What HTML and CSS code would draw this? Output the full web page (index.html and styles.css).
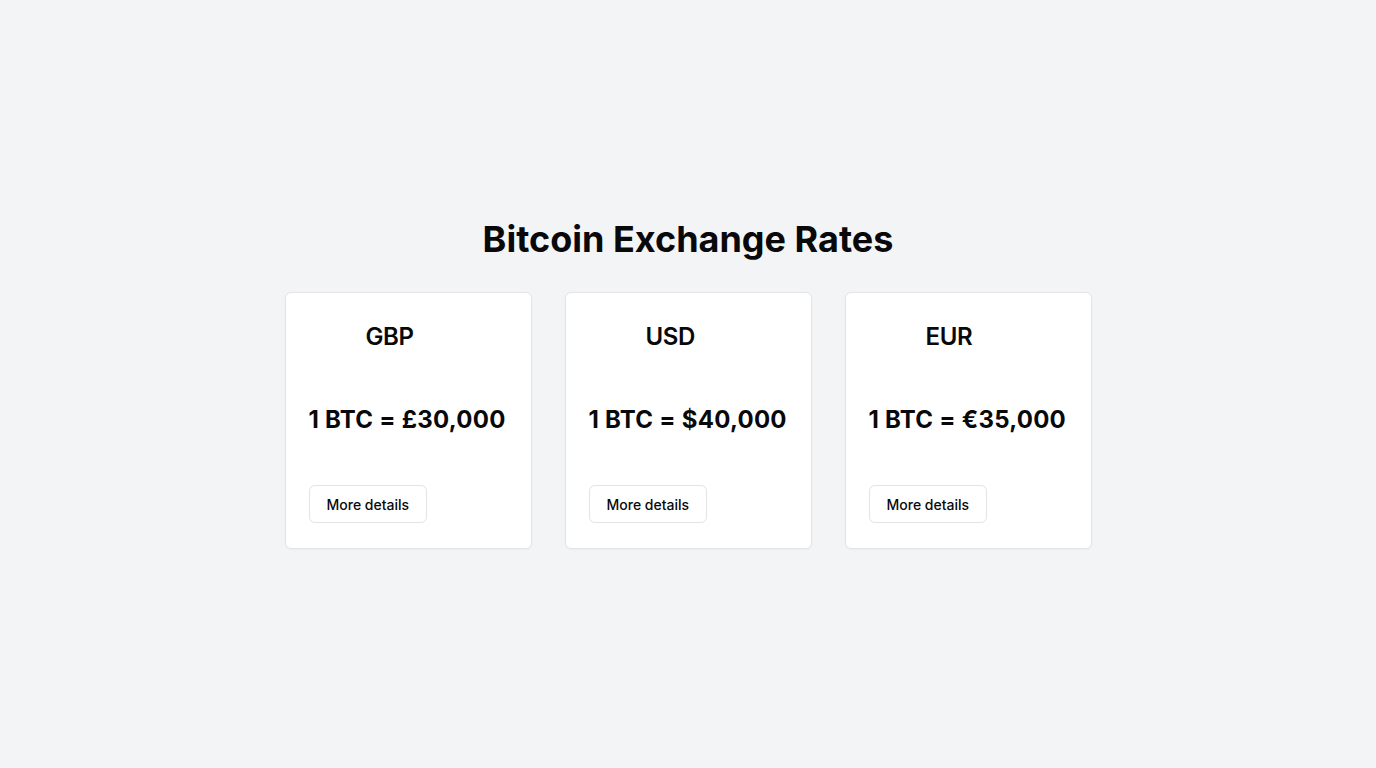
FILE: index.html
```html
<!DOCTYPE html>
<html lang="en">
<head>
<meta charset="utf-8">
<title>Bitcoin Exchange Rates</title>
<link rel="stylesheet" href="styles.css">
</head>
<body>
<main class="page">
  <h1 class="title">Bitcoin Exchange Rates</h1>
  <div class="cards">
    <div class="card">
      <div class="card-header"><span class="flag"></span><span class="currency">GBP</span></div>
      <div class="price">1 BTC = £30,000</div>
      <div class="card-footer"><button class="btn">More details</button></div>
    </div>
    <div class="card">
      <div class="card-header"><span class="flag"></span><span class="currency">USD</span></div>
      <div class="price">1 BTC = $40,000</div>
      <div class="card-footer"><button class="btn">More details</button></div>
    </div>
    <div class="card">
      <div class="card-header"><span class="flag"></span><span class="currency">EUR</span></div>
      <div class="price">1 BTC = €35,000</div>
      <div class="card-footer"><button class="btn">More details</button></div>
    </div>
  </div>
</main>
</body>
</html>
```
FILE: styles.css
```css
* { box-sizing: border-box; }
html, body { margin: 0; padding: 0; }
body {
  background: #f3f4f6;
  font-family: Inter, "Noto Sans", sans-serif;
  color: #09090b;
}
.page {
  min-height: 100vh;
  display: flex;
  flex-direction: column;
  align-items: center;
  justify-content: center;
}
.title {
  margin: 0 0 33px;
  font-size: 36px;
  line-height: 40px;
  font-weight: 700;
}
.cards {
  display: flex;
  gap: 33px;
}
.card {
  width: 247px;
  background: #fff;
  border: 1px solid #e4e4e7;
  border-radius: 6px;
  padding: 24px 23px 25px 23px;
  display: flex;
  flex-direction: column;
  box-shadow: 0 1px 2px rgba(0,0,0,0.03);
}
.card-header {
  display: flex;
  align-items: center;
  gap: 16px;
  height: 40px;
}
.flag {
  width: 41px;
  height: 40px;
}
.currency {
  font-size: 24px;
  line-height: 32px;
  font-weight: 600;
  letter-spacing: -0.4px;
}
.price {
  margin-top: 47px;
  font-size: 24px;
  line-height: 32px;
  font-weight: 700;
  letter-spacing: 0.25px;
  white-space: nowrap;
}
.card-footer {
  margin-top: 49px;
  display: flex;
}
.btn {
  height: 38px;
  padding: 0 17px;
  background: #fff;
  border: 1px solid #e4e4e7;
  border-radius: 6px;
  font-family: Inter, "Noto Sans", sans-serif;
  font-size: 14px;
  font-weight: 500;
  color: #09090b;
}
```
